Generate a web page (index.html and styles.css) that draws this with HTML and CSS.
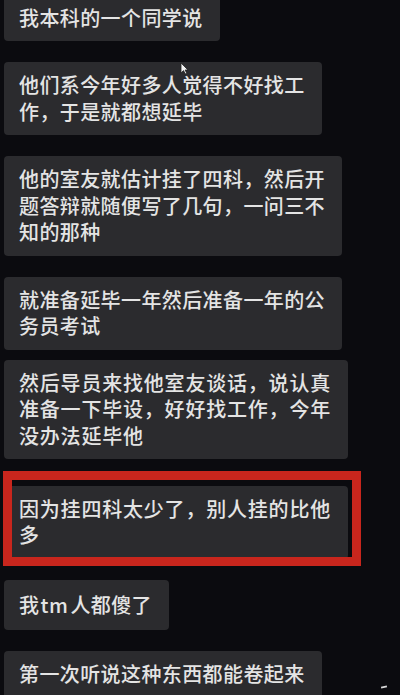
FILE: index.html
```html
<!DOCTYPE html>
<html lang="zh-CN">
<head>
  <meta charset="UTF-8" />
  <meta name="viewport" content="width=device-width, initial-scale=1.0" />
  <title>聊天记录</title>
  <link rel="stylesheet" href="styles.css">
</head>
<body>
  <div class="chat">
    <div class="bubble">我本科的一个同学说</div>
    <div class="bubble">他们系今年好多人觉得不好找工<br>作，于是就都想延毕</div>
    <div class="bubble">他的室友就估计挂了四科，然后开<br>题答辩就随便写了几句，一问三不<br>知的那种</div>
    <div class="bubble">就准备延毕一年然后准备一年的公<br>务员考试</div>
    <div class="bubble tight wide">然后导员来找他室友谈话，说认真<br>准备一下毕设，好好找工作，今年<br>没办法延毕他</div>
    <div class="marked">
      <div class="bubble wide">因为挂四科太少了，别人挂的比他<br>多</div>
    </div>
    <div class="bubble tall">我<span class="latin">tm</span>人都傻了</div>
    <div class="bubble">第一次听说这种东西都能卷起来</div>

    <!-- mouse pointer left on the screen -->
    <svg class="cursor" width="9" height="13" viewBox="0 0 9 13">
      <path d="M1 1 L1 11 L3.5 8.6 L5.3 12 L6.8 11.3 L5.1 8 L8 8 Z" fill="#f2f2f2" stroke="#222" stroke-width="0.8"/>
    </svg>
    <span class="dash"></span>
  </div>
</body>
</html>
```

FILE: styles.css
```css
html, body {
  margin: 0;
  padding: 0;
  height: 100%;
  overflow: hidden;
}
body {
  background: #0b0b0f;
  font-family: "Noto Sans CJK SC", "Noto Sans", sans-serif;
  color: #e4e4e4;
}
.chat {
  position: relative;
  display: flex;
  flex-direction: column;
  align-items: flex-start;
  gap: 21px;
  margin-top: -5.5px;
  margin-left: -3px;
  padding-left: 4px;
  height: 720px;
  border-left: 3px solid #141417;
}
.bubble {
  background: #2b2b2e;
  border-radius: 4px;
  padding: 10px 17px 10px 15px;
  font-size: 20px;
  letter-spacing: 0.4px;
  line-height: 26.5px;
  font-weight: 500;
  white-space: nowrap;
}
.bubble.wide {
  letter-spacing: 0.8px;
}
.bubble.tight {
  margin-top: -11px;
}
.bubble.tall {
  padding-top: 12px;
  padding-bottom: 12px;
}
.latin {
  margin: 0 2px 0 1px;
  letter-spacing: 0.6px;
}

/* red highlight frame drawn over one message */
.marked {
  position: relative;
  margin-top: 5.5px;
}
.marked::after {
  content: "";
  position: absolute;
  top: -14.5px;
  left: -1px;
  right: -13px;
  bottom: -7.5px;
  border: 9px solid #c8261d;
}
.cursor {
  position: absolute;
  left: 180px;
  top: 67px;
}
.dash {
  position: absolute;
  left: 381px;
  top: 691px;
  width: 6px;
  height: 2px;
  background: #d8d8d8;
  transform: rotate(-12deg);
}
```
